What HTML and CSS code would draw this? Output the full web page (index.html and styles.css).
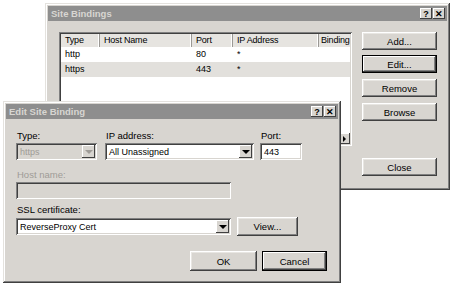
FILE: index.html
```html
<!DOCTYPE html>
<html lang="en">
<head>
  <meta charset="UTF-8" />
  <title>Site Bindings</title>
  <link rel="stylesheet" href="styles.css">
</head>
<body>
  <div class="desk">
    <div class="win sites">
      <div class="title">
        <span>Site Bindings</span>
        <div class="caps"><span class="cap">?</span><span class="cap">&#x2715;</span></div>
      </div>
      <div class="sites-body">
        <div class="list">
          <div class="list-head">
            <span>Type</span><span>Host Name</span><span>Port</span><span>IP Address</span><span>Binding</span>
          </div>
          <div class="row"><span>http</span><span></span><span>80</span><span>*</span><span></span></div>
          <div class="row sel"><span>https</span><span></span><span>443</span><span>*</span><span></span></div>
          <div class="hscroll"><span class="arrow-btn right"></span></div>
        </div>
        <div class="side">
          <button class="btn">Add...</button>
          <button class="btn default">Edit...</button>
          <button class="btn">Remove</button>
          <button class="btn">Browse</button>
          <button class="btn close">Close</button>
        </div>
      </div>
    </div>

    <div class="win edit">
      <div class="title">
        <span>Edit Site Binding</span>
        <div class="caps"><span class="cap">?</span><span class="cap">&#x2715;</span></div>
      </div>
      <div class="edit-body">
        <div class="line">
          <div class="field f-type">
            <label>Type:</label>
            <div class="combo disabled"><span>https</span><span class="drop"></span></div>
          </div>
          <div class="field f-ip">
            <label>IP address:</label>
            <div class="combo"><span>All Unassigned</span><span class="drop"></span></div>
          </div>
          <div class="field f-port">
            <label>Port:</label>
            <div class="text">443</div>
          </div>
        </div>
        <label class="host-label">Host name:</label>
        <div class="text wide disabled"></div>
        <label class="ssl-label">SSL certificate:</label>
        <div class="line">
          <div class="combo wide"><span>ReverseProxy Cert</span><span class="drop"></span></div>
          <button class="btn view">View...</button>
        </div>
        <div class="actions">
          <button class="btn ok">OK</button>
          <button class="btn default cancel">Cancel</button>
        </div>
      </div>
    </div>
  </div>
</body>
</html>
```

FILE: styles.css
```css
* {
  box-sizing: border-box;
}

body {
  margin: 0;
  background: #fff;
  font-family: "Liberation Sans", Arial, sans-serif;
  font-size: 9px;
  color: #000;
}

.desk {
  position: relative;
  width: 455px;
  height: 286px;
  overflow: hidden;
}

.win {
  position: absolute;
  display: flex;
  flex-direction: column;
  padding: 3px;
  background: #d8d5d0;
  box-shadow: inset -1px -1px #404040, inset 1px 1px #e4e2de,
              inset -2px -2px #808080, inset 2px 2px #fff;
}

.sites { left: 45px; top: 3px; width: 405px; height: 187px; }
.edit { left: 3px; top: 101px; width: 338px; height: 182px; }

.title {
  height: 15px;
  display: flex;
  align-items: center;
  justify-content: space-between;
  padding: 0 2px 0 3px;
  background: #8e8e8e;
  color: #d8d6d2;
  font-weight: bold;
  font-size: 9.5px;
}

.caps {
  display: flex;
  gap: 1px;
}

.cap {
  width: 12px;
  height: 11px;
  display: flex;
  align-items: center;
  justify-content: center;
  background: #d8d5d0;
  font-size: 9px;
  font-weight: bold;
  color: #000;
  box-shadow: inset -1px -1px #404040, inset 1px 1px #fff;
}

/* site bindings */

.sites-body {
  display: flex;
  gap: 10px;
  padding: 11px 0 0 11px;
}

.list {
  width: 293px;
  height: 114px;
  display: flex;
  flex-direction: column;
  padding: 2px;
  overflow: hidden;
  background: #fff;
  box-shadow: inset 1px 1px #808080, inset -1px -1px #fff,
              inset 2px 2px #404040, inset -2px -2px #d8d5d0;
}

.list-head, .row {
  display: grid;
  grid-template-columns: 39px 92px 41px 86px 1fr;
}

.list-head {
  height: 13px;
  background: #e6e4e0;
  letter-spacing: -0.2px;
}

.list-head span {
  padding-left: 4px;
  line-height: 13px;
  white-space: nowrap;
  border-right: 1px solid #9a9894;
  box-shadow: inset -1px 0 #fff;
}

.list-head span:last-child {
  padding-left: 2px;
  border-right: none;
  box-shadow: none;
}

.row {
  height: 15px;
  line-height: 15px;
}

.row span {
  padding-left: 4px;
}

.row.sel {
  background: #e2e0dc;
}

.hscroll {
  margin-top: auto;
  height: 11px;
  display: flex;
  justify-content: flex-end;
  background: #ebe9e6;
}

.arrow-btn {
  width: 11px;
  height: 11px;
  display: flex;
  align-items: center;
  justify-content: center;
  background: #d8d5d0;
  box-shadow: inset -1px -1px #404040, inset 1px 1px #fff;
}

.arrow-btn.right::after {
  content: "";
  border-left: 3px solid #000;
  border-top: 3px solid transparent;
  border-bottom: 3px solid transparent;
}

.side {
  width: 75px;
  display: flex;
  flex-direction: column;
  gap: 5px;
}

.btn {
  height: 18px;
  padding: 0;
  border: none;
  background: #d8d5d0;
  font-family: inherit;
  font-size: 9.5px;
  color: #000;
  box-shadow: inset -1px -1px #404040, inset 1px 1px #fff,
              inset -2px -2px #808080, inset 2px 2px #e8e6e2;
}

.btn.default {
  box-shadow: inset 0 0 0 1px #000, inset -2px -2px #404040, inset 2px 2px #fff,
              inset -3px -3px #808080;
}

.side .btn:nth-child(3) { margin-top: 1px; }
.side .btn:nth-child(4) { margin-top: 1px; }
.side .close { margin-top: 32px; }

/* edit site binding */

.edit-body {
  display: flex;
  flex-direction: column;
  align-items: flex-start;
  padding: 11px 0 0 10px;
}

label {
  display: block;
  padding-left: 1px;
  line-height: 12px;
  margin-bottom: 1px;
  font-size: 9.5px;
}

.line {
  display: flex;
}

.f-type { width: 81px; margin-right: 8px; }
.f-ip { width: 149px; margin-right: 6px; }
.f-port { width: 42px; }

.combo, .text {
  height: 17px;
  display: flex;
  align-items: center;
  justify-content: space-between;
  padding: 2px 2px 2px 4px;
  background: #fff;
  white-space: nowrap;
  box-shadow: inset 1px 1px #808080, inset -1px -1px #fff,
              inset 2px 2px #404040, inset -2px -2px #d8d5d0;
}

.combo.disabled, .text.disabled {
  background: #d8d5d0;
  color: #9f9c97;
}

.drop {
  width: 13px;
  height: 13px;
  display: flex;
  align-items: center;
  justify-content: center;
  background: #d8d5d0;
  box-shadow: inset -1px -1px #404040, inset 1px 1px #fff;
}

.drop::after {
  content: "";
  border-top: 4px solid #000;
  border-left: 4px solid transparent;
  border-right: 4px solid transparent;
}

.disabled .drop::after {
  border-top-color: #9f9c97;
}

.host-label {
  margin-top: 9px;
  color: #9f9c97;
}

.text.wide, .combo.wide {
  width: 215px;
}

.ssl-label {
  margin-top: 5px;
}

.ssl-label + .line {
  align-items: center;
}

.view {
  width: 61px;
  height: 19px;
  margin-left: 6px;
}

.actions {
  align-self: flex-end;
  display: flex;
  gap: 5px;
  margin: 15px 11px 0 0;
}

.ok { width: 67px; height: 20px; }
.cancel { width: 65px; height: 20px; }
```
